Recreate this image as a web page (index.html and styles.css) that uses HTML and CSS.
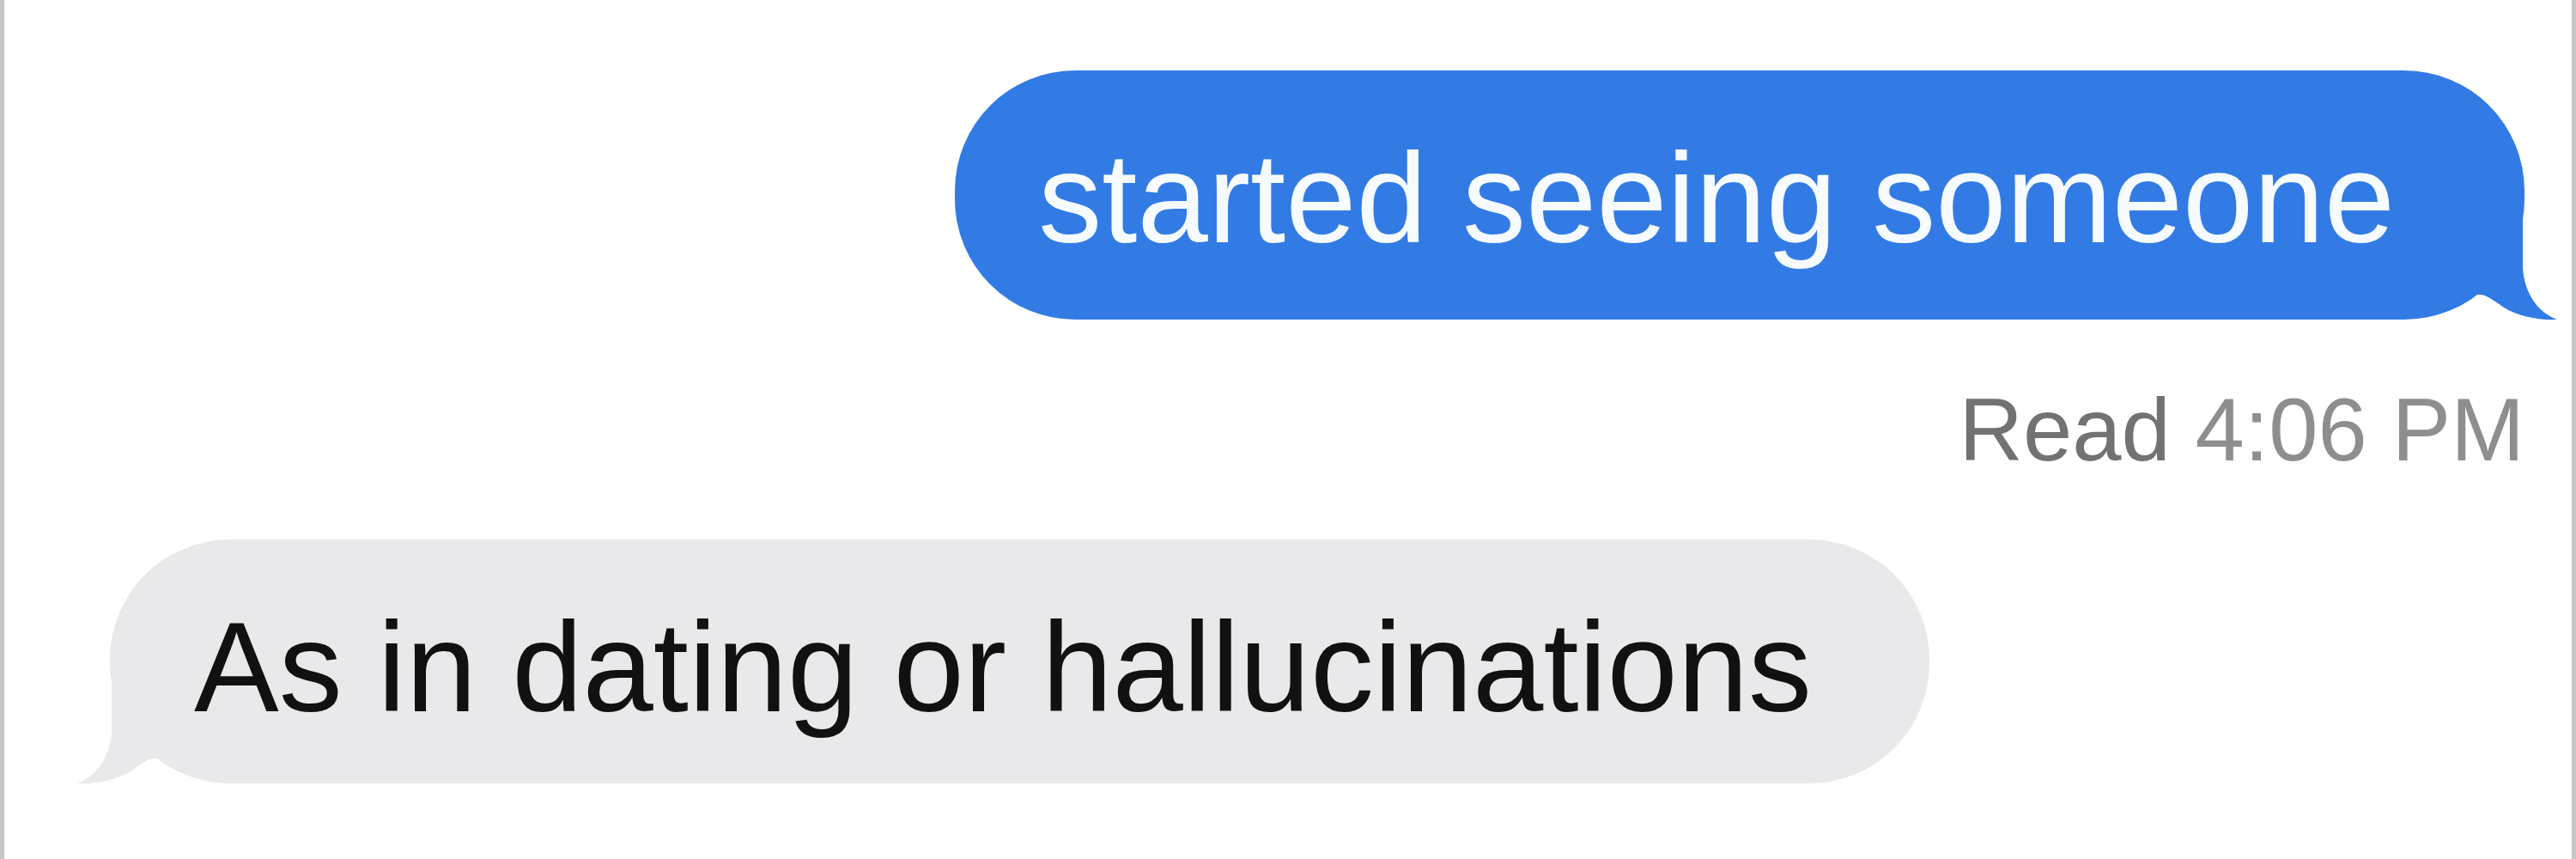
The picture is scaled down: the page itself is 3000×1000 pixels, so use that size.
FILE: index.html
```html
<!DOCTYPE html>
<html>
<head>
    <title>Messages</title>
    <link rel="stylesheet" href="styles.css">
</head>
<body>
    <div class="thread">
        <div class="bubble sent">
            <span class="bubble-text">started seeing someone</span>
            <svg class="tail" viewBox="0 0 110 130">
                <path d="M68 0 L68 70 C70 100 86 122 108 130 C86 131 62 126 46 116 C36 109 26 101 18 101 L0 101 L0 0 Z"/>
            </svg>
        </div>

        <div class="receipt"><span class="receipt-label">Read</span> 4:06 PM</div>

        <div class="bubble received">
            <span class="bubble-text">As in dating or hallucinations</span>
            <svg class="tail" viewBox="0 0 110 130">
                <path d="M68 0 L68 70 C70 100 86 122 108 130 C86 131 62 126 46 116 C36 109 26 101 18 101 L0 101 L0 0 Z"/>
            </svg>
        </div>
    </div>
</body>
</html>
```

FILE: styles.css
```css
* {
    margin: 0;
    padding: 0;
    box-sizing: border-box;
}

body {
    font-family: 'Liberation Sans', Arial, sans-serif;
    background: #ffffff;
    width: 3000px;
    height: 1000px;
    overflow: hidden;
}

.thread {
    height: 1000px;
    display: flex;
    flex-direction: column;
    padding-top: 82px;
    border-left: 5px solid #c6c6c6;
    border-right: 5px solid #c6c6c6;
}

.bubble {
    position: relative;
    border-radius: 140px;
    font-size: 148px;
    line-height: 170px;
    white-space: nowrap;
}

.bubble-text {
    position: relative;
    z-index: 1;
}

.sent {
    align-self: flex-end;
    margin-right: 55px;
    padding: 64px 151px 56px 97px;
    background: #327be5;
    color: #f6fbff;
}

.received {
    align-self: flex-start;
    margin-left: 123px;
    margin-top: 68px;
    padding: 64px 137px 50px 98px;
    background: #e9e9eb;
    color: #111111;
}

/* Bubble tails */
.tail {
    position: absolute;
    bottom: 0;
    width: 110px;
    height: 130px;
    overflow: visible;
}

.sent .tail {
    right: -40px;
    fill: #327be5;
}

.received .tail {
    left: -40px;
    fill: #e9e9eb;
    transform: scaleX(-1);
}

.receipt {
    align-self: flex-end;
    margin-right: 55px;
    margin-top: 70px;
    font-size: 103px;
    line-height: 118px;
    color: #8e8e8e;
}

.receipt-label {
    color: #727272;
}
```
